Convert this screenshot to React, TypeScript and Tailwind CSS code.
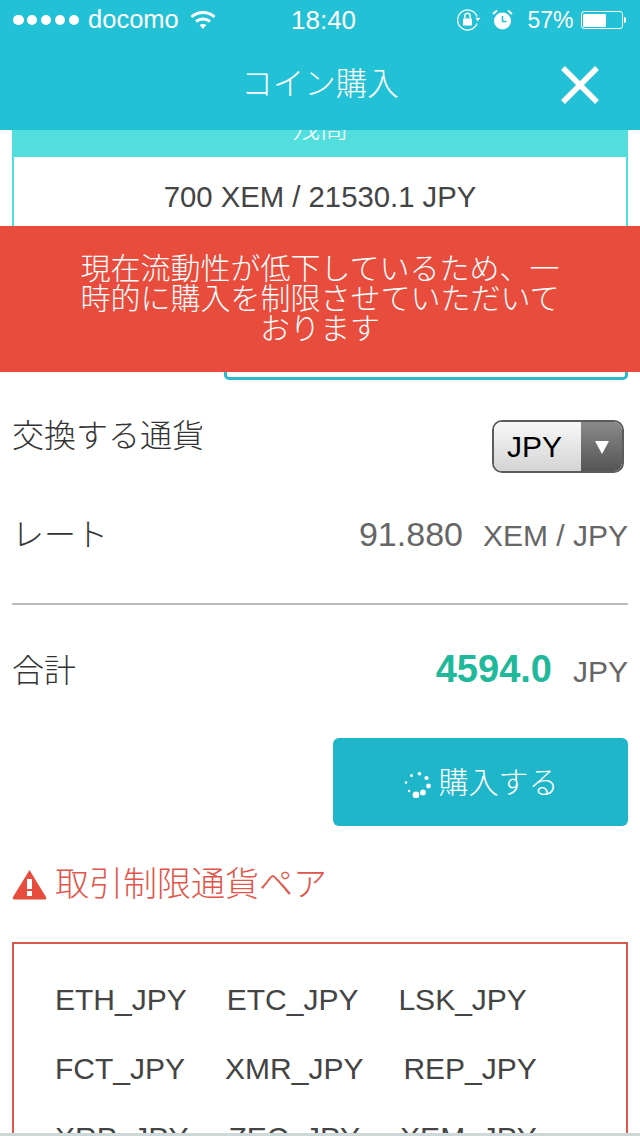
const pairs = ['ETH_JPY', 'ETC_JPY', 'LSK_JPY', 'FCT_JPY', 'XMR_JPY', 'REP_JPY', 'XRP_JPY', 'ZEC_JPY', 'XEM_JPY'];

const spinnerDots = [
  [13, 23, 3.4],
  [20, 20.5, 2.9],
  [25.5, 14, 2.4],
  [23.5, 6, 2.1],
  [16.5, 1.8, 1.8],
  [8.5, 3.5, 1.5],
  [3, 10.5, 1.3],
  [6, 19, 1.2],
];

const StatusBar = () => (
  <div className="flex h-[40px] items-center text-white">
    <div className="flex w-[291px] items-center pl-[13px]">
      <div className="flex gap-[3.4px]">
        {[0, 1, 2, 3, 4].map(i => (
          <span key={i} className="h-[10.5px] w-[10.5px] rounded-full bg-white" />
        ))}
      </div>
      <span className="ml-[9px] text-[25.5px] leading-none">docomo</span>
      <svg className="ml-[11px]" width="26" height="20" viewBox="0 0 26 20" fill="none" stroke="white" strokeWidth="3">
        <path d="M1.5 7 C8 1 18 1 24.5 7" />
        <path d="M6 11.5 C10 8 16 8 20 11.5" />
        <path d="M13 19 L9.5 15 C11.5 13.5 14.5 13.5 16.5 15 Z" fill="white" stroke="none" />
      </svg>
    </div>
    <span className="w-[66px] text-[26px] leading-none">18:40</span>
    <div className="flex flex-1 items-center justify-end pr-[14px]">
      <svg width="25" height="24" viewBox="0 0 25 24" fill="none" stroke="white" strokeWidth="1.3">
        <path d="M21 15.5 A10 10 0 1 1 21 8.5" />
        <path d="M19.5 9.5 L24.5 10 L21.5 13.5 Z" fill="white" stroke="none" />
        <rect x="7" y="10.5" width="9" height="7" fill="white" stroke="none" />
        <path d="M8.8 10.5 V8 a2.7 2.7 0 0 1 5.4 0 V10.5" strokeWidth="1.6" />
      </svg>
      <svg className="ml-[11px]" width="21" height="22" viewBox="0 0 21 22" fill="white">
        <circle cx="10.5" cy="12" r="8.5" />
        <path d="M10.5 7 V12.5 H14.5" stroke="#22c1d6" strokeWidth="1.6" fill="none" />
        <path d="M1 5 L5 1.5 M20 5 L16 1.5" stroke="white" strokeWidth="2" />
      </svg>
      <span className="ml-[14px] text-[23px] leading-none">57%</span>
      <div className="ml-[7px] flex items-center">
        <div className="flex h-[18px] w-[42px] rounded-[3px] border border-white p-[1.5px]">
          <div className="h-full w-[23px] rounded-[1px] bg-white" />
        </div>
        <div className="ml-[1px] h-[6px] w-[2.5px] rounded-r-[2px] bg-white" />
      </div>
    </div>
  </div>
);

const App = () => {
  return (
    <div className="relative flex h-[1136px] w-[640px] flex-col overflow-hidden bg-white font-['Liberation_Sans','Noto_Sans_CJK_JP',sans-serif] text-[#444]">
      <header className="z-10 h-[130px] flex-none bg-[#22c1d6]">
        <StatusBar />
        <div className="grid h-[90px] grid-cols-[1fr_auto_1fr] items-center text-white">
          <div />
          <h1 className="text-[31.5px] font-light leading-none">コイン購入</h1>
          <div className="flex justify-end pr-[41px]">
            <svg width="38" height="38" viewBox="0 0 38 38" stroke="white" strokeWidth="5.5">
              <path d="M2 2 L36 36 M36 2 L2 36" />
            </svg>
          </div>
        </div>
      </header>

      <main className="flex-1 overflow-hidden px-3">
        <div className="-mt-[30px]">
          <div className="flex h-[57px] items-center justify-center bg-[#53dede] text-[28px] font-light text-white">残高</div>
          <div className="flex h-[90px] items-start justify-center border-x-2 border-[#53dede] pt-[23px] text-[29.3px] leading-[34px]">
            700 XEM / 21530.1 JPY
          </div>
          <div className="ml-[212px] mt-[53px] h-[80px] rounded-[5px] border-[3px] border-[#2cb9cc]" />

          <div className="mt-[40px] flex items-start justify-between pr-1">
            <span className="text-[32px] font-light leading-[32px] text-[#333]">交換する通貨</span>
            <div className="flex h-[53px] w-[132px] overflow-hidden rounded-[10px] border-2 border-[#5c5c5c] text-[30px] text-black">
              <div className="flex flex-1 items-center bg-gradient-to-b from-[#f8f8f8] to-[#d4d4d4] pl-[13px]">JPY</div>
              <div className="flex w-[41px] items-center justify-center bg-gradient-to-b from-[#8a8a8a] to-[#555]">
                <svg width="14" height="14" viewBox="0 0 14 14" fill="white"><path d="M0 1 H14 L7 14 Z" /></svg>
              </div>
            </div>
          </div>

          <div className="mt-[41px] flex items-center justify-between pb-[42px]">
            <span className="mb-[6px] text-[32px] font-light leading-[40px] text-[#333]">レート</span>
            <span className="leading-[40px] text-[#666]">
              <span className="text-[34px]">91.880</span>
              <span className="ml-[20px] text-[30px]">XEM / JPY</span>
            </span>
          </div>
          <div className="h-[2px] bg-[#bbb]" />

          <div className="mt-[44px] flex items-center justify-between">
            <span className="mb-[4px] text-[32px] font-light leading-[40px] text-[#333]">合計</span>
            <span className="leading-[40px]">
              <span className="text-[38px] font-bold text-[#1fb89b]">4594.0</span>
              <span className="ml-[21px] text-[30px] text-[#666]">JPY</span>
            </span>
          </div>

          <div className="mt-[41px] flex justify-end">
            <button className="flex h-[88px] w-[295px] items-center justify-center gap-[6px] rounded-[6px] bg-[#20b6ca] text-[30px] font-light text-white">
              <svg className="mt-[6px]" width="30" height="26" viewBox="0 0 30 26" fill="white">
                {spinnerDots.map(([cx, cy, r]) => (
                  <circle key={cx + '-' + cy} cx={cx} cy={cy} r={r} />
                ))}
              </svg>
              購入する
            </button>
          </div>

          <div className="mt-[38px] flex h-[40px] items-center gap-[8px] text-[34px] font-light text-[#e0564a]">
            <svg width="35" height="31" viewBox="0 0 35 31">
              <path d="M17.5 1 L34 28 Q35 30.5 32.5 30.5 H2.5 Q0 30.5 1 28 Z" fill="#e74c3c" />
              <rect x="15" y="10" width="5" height="10" fill="white" />
              <rect x="15" y="22" width="5" height="5" fill="white" />
            </svg>
            <span className="leading-none">取引制限通貨ペア</span>
          </div>

          <div className="mt-[38px] border-2 border-[#d9574b] pb-[30px] pl-[41px] pr-[20px] pt-[39px]">
            <div className="flex flex-wrap gap-x-[40px] gap-y-[35px] text-[30px] leading-[34px]">
              {pairs.map(p => (
                <span key={p}>{p}</span>
              ))}
            </div>
          </div>
        </div>
      </main>

      <div className="absolute inset-x-0 top-[226px] z-20 bg-[#e74c3c] px-[80px] py-[28px] text-center text-[30px] font-light leading-[30px] text-white">
        現在流動性が低下しているため、一時的に購入を制限させていただいております
      </div>
      <div className="absolute inset-x-0 bottom-0 z-20 h-[3px] bg-[#cfd8d8]" />
    </div>
  );
};

export default App;
